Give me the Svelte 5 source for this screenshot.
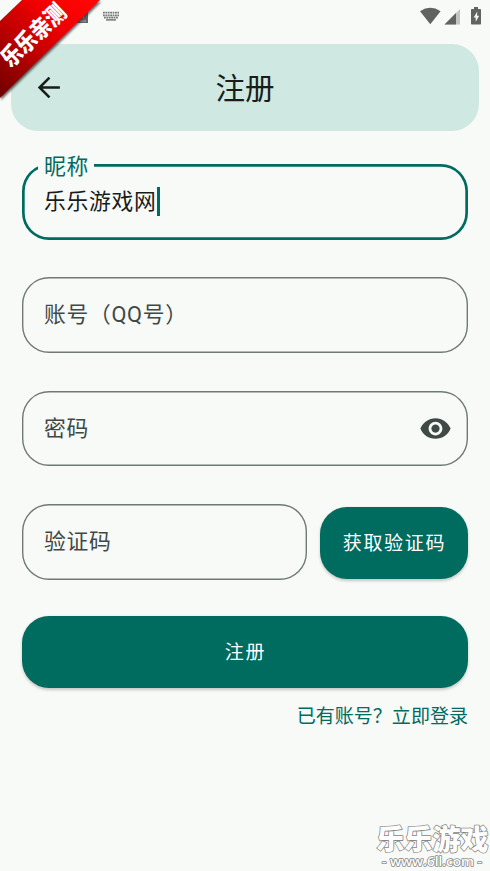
<script>
  let nickname = $state('乐乐游戏网');
</script>

<main lang="zh-CN">
  <div class="status">
    <svg class="left" width="140" height="32" viewBox="0 0 140 32">
      <path d="M70 10h18v13H70z" fill="#666" />
      <path d="M83.500 14v5M80 21h6" stroke="#aaa" fill="none" />
      <path d="M103 12.700h16M103 15.400h16M104 17.700h14" stroke="#777" stroke-width="1.7" stroke-dasharray="1.8 .6" />
      <path d="M106 19.900h10" stroke="#777" stroke-width="1.5" />
    </svg>
    <svg class="right" width="90" height="32" viewBox="400 0 90 32">
      <path d="M420 11.2Q430.3 4.300 440.600 11.200L430.300 24.200Z" fill="#626262" />
      <path d="M460 9v15.500h-15.500z" fill="#c2c3c2" />
      <path d="M456 13v11.500h-11.500z" fill="#626262" />
      <path d="M474 7h4v2h2.200q.8 0 .8.800v14q0 .8-.8.800h-8.400q-.8 0-.8-.8v-14q0-.8.8-.8h2.200z" fill="#626262" />
      <path d="M477.300 11.500l-3.600 6h2v4.300l3.500-6h-2.100z" fill="#f8faf7" />
    </svg>
  </div>

  <header>
    <svg class="back" width="33" height="33" viewBox="0 0 24 24"><path d="M20.300 12H6M12.700 4.800L5.500 12L12.700 19.200" fill="none" stroke="#191c1b" stroke-width="1.850" /></svg>
    <h1>注册</h1>
  </header>

  <form>
    <div class="field focused">
      <span class="label">昵称</span>
      <span class="value">{nickname}</span><i class="caret"></i>
    </div>
    <div class="field"><span>账号（QQ号）</span></div>
    <div class="field">
      <span>密码</span>
      <svg class="eye" width="33" height="33" viewBox="0 0 24 24"><path fill="#3f4946" d="M12 4.500C7 4.500 2.730 7.610 1 12c1.730 4.390 6 7.500 11 7.500s9.270-3.110 11-7.500c-1.730-4.390-6-7.500-11-7.500zM12 17c-2.760 0-5-2.240-5-5s2.240-5 5-5 5 2.240 5 5-2.240 5-5 5zm0-8c-1.660 0-3 1.340-3 3s1.340 3 3 3 3-1.340 3-3-1.340-3-3-3z" /></svg>
    </div>
    <div class="row">
      <div class="field"><span>验证码</span></div>
      <button type="button" class="code">获取验证码</button>
    </div>
    <button type="button" class="submit">注册</button>
    <a href="#login">已有账号？立即登录</a>
  </form>

  <svg class="ribbon" width="110" height="110" viewBox="0 0 110 110">
    <defs>
      <linearGradient id="red" gradientUnits="userSpaceOnUse" x1="0" y1="90" x2="85" y2="0">
        <stop offset="0" stop-color="#760000" />
        <stop offset=".35" stop-color="#b50000" />
        <stop offset=".7" stop-color="#f00000" />
        <stop offset="1" stop-color="#ff0505" />
      </linearGradient>
      <filter id="soft"><feGaussianBlur stdDeviation="1.200" /></filter>
    </defs>
    <path d="M22 2H101L1 100V22z" fill="#333" opacity=".75" filter="url(#soft)" />
    <path d="M22 0H100L0 98V21z" fill="url(#red)" />
    <text transform="translate(10.500 68.500) rotate(-43.500)" textLength="79" lengthAdjust="spacingAndGlyphs">乐乐亲测</text>
  </svg>

  <svg class="mark" width="120" height="61" viewBox="370 810 120 61">
    <text class="brand" x="376.500" y="849.500" textLength="112" lengthAdjust="spacingAndGlyphs">乐乐游戏</text>
    <text class="url" x="382" y="865.500" textLength="100" lengthAdjust="spacingAndGlyphs">- www.6ll.com -</text>
  </svg>
</main>

<style>
  :global(body) { margin: 0; background: #f8faf7; }
  main {
    position: relative;
    box-sizing: border-box;
    width: 490px;
    height: 871px;
    overflow: hidden;
    background: #f8faf7;
    color: #191c1b;
    font-family: "Noto Sans CJK SC", sans-serif;
  }
  svg { display: block; flex: none; }
  .status { display: flex; justify-content: space-between; height: 43.500px; }
  header {
    display: grid;
    grid-template-columns: 76px 1fr 76px;
    align-items: center;
    height: 87px;
    margin: 0 11px;
    border-radius: 27px;
    background: #cfe8e1;
  }
  .back { margin-left: 21px; }
  h1 { margin: 0; padding-bottom: 2px; text-align: center; font-size: 29.500px; line-height: 40px; font-weight: 400; }
  form { display: flex; flex-direction: column; padding: 33.500px 22px 0; }
  .field {
    position: relative;
    display: flex;
    align-items: center;
    box-sizing: border-box;
    height: 75.500px;
    margin-bottom: 37.900px;
    padding: 0 16px 0 22px;
    box-shadow: inset 0 0 0 1.400px #6f7976;
    border-radius: 27px;
    color: #3f4946;
    font-family: Roboto, "Noto Sans CJK SC", sans-serif;
    font-size: 21.800px;
    letter-spacing: .68px;
    line-height: 30px;
  }
  .focused { box-shadow: inset 0 0 0 2.700px #006b5f; }
  .label {
    position: absolute;
    left: 16px;
    top: -12px;
    padding: 0 5px 0 6px;
    background: #f8faf7;
    color: #006b5f;
  }
  .value { color: #191c1b; padding-top: 1px; }
  .caret { width: 2.700px; height: 29px; margin-left: .8px; background: #006b5f; }
  .eye { margin-left: auto; }
  .row { display: flex; gap: 13px; }
  .row .field { width: 285px; margin-bottom: 36px; }
  button {
    display: block;
    height: 72.300px;
    padding: 2px 0 0 1px;
    border: 0;
    border-radius: 27px;
    background: #006b5f;
    color: #fff;
    font: 400 19.050px/28px Roboto, "Noto Sans CJK SC", sans-serif;
    letter-spacing: 1.700px;
    box-shadow: 0 1.500px 3px #0003;
  }
  .code { width: 148px; margin-top: 2.500px; }
  .submit { width: 100%; }
  a {
    align-self: flex-end;
    margin-top: 13.500px;
    color: #006b5f;
    font-size: 19.050px;
    line-height: 28px;
    text-decoration: none;
  }
  .ribbon { position: absolute; left: 0; top: 0; }
  .ribbon text { font: 900 23.500px "Noto Sans CJK SC", sans-serif; fill: #fff; }
  .mark { position: absolute; right: 0; bottom: 0; }
  .mark text { fill: #fff; stroke: #888; paint-order: stroke; stroke-linejoin: round; }
  .brand { font: 900 28px "Noto Sans CJK SC", sans-serif; stroke-width: 1.600px; }
  .url { font: 600 13px "Open Sans", sans-serif; stroke-width: 1.600px; }
</style>
